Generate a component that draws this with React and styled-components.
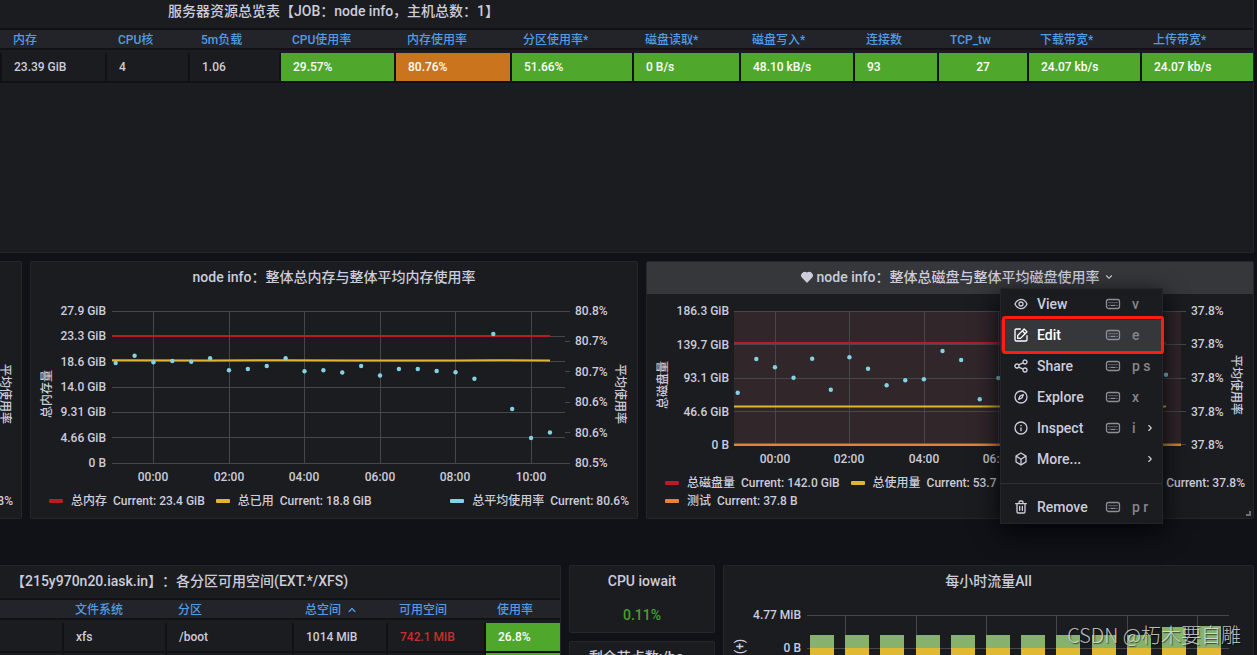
import React, { useState } from 'react';
import styled, { createGlobalStyle } from 'styled-components';

//-----------------------------------------------{data}------------------------------------------------------//

const serverColumns = [
    { label: '内存', width: 105, value: '23.39 GiB' },
    { label: 'CPU核', width: 83, value: '4' },
    { label: '5m负载', width: 91, value: '1.06' },
    { label: 'CPU使用率', width: 115, value: '29.57%', fill: '#4fa82c' },
    { label: '内存使用率', width: 116, value: '80.76%', fill: '#ca751e' },
    { label: '分区使用率*', width: 122, value: '51.66%', fill: '#4fa82c' },
    { label: '磁盘读取*', width: 107, value: '0 B/s', fill: '#4fa82c' },
    { label: '磁盘写入*', width: 114, value: '48.10 kB/s', fill: '#4fa82c' },
    { label: '连接数', width: 84, value: '93', fill: '#4fa82c' },
    { label: 'TCP_tw', width: 90, value: '27', fill: '#4fa82c', center: true },
    { label: '下载带宽*', width: 113, value: '24.07 kb/s', fill: '#4fa82c' },
    { label: '上传带宽*', value: '24.07 kb/s', fill: '#4fa82c' },
];

const diskColumns = [
    { label: '', width: 64 },
    { label: '文件系统', width: 103 },
    { label: '分区', width: 127 },
    { label: '总空间', width: 94, sorted: true },
    { label: '可用空间', width: 98 },
    { label: '使用率' },
];

const memoryPoints = [
    363, 355.7, 362.3, 361, 361.7, 358.3, 370.3, 369, 366, 358.3, 371.3, 370.3, 372.5,
    366, 375.5, 369, 369, 371, 372.3, 378.7, 334, 409, 438, 432.5,
];

const diskPoints = [
    392.7, 359, 367.3, 377.7, 358.7, 389.7, 357.3, 368.7, 385.3, 380.3, 379.3, 351, 360,
    399.3, 378, 371, 383, 366, 374, 388, 362, 379, 370, 374.7,
];

const trafficBars = [635, 635, 635, 635, 635, 635, 635, 635, 635, 635, 627, 626];

const menuItems = [
    { label: 'View', icon: 'eye', keys: 'v' },
    { label: 'Edit', icon: 'edit', keys: 'e', active: true },
    { label: 'Share', icon: 'share', keys: 'p s' },
    { label: 'Explore', icon: 'compass', keys: 'x' },
    { label: 'Inspect', icon: 'info', keys: 'i', sub: true },
    { label: 'More...', icon: 'cube', sub: true },
];

const iconPaths = {
    eye: 'M21.92,11.6C19.9,6.91,16.1,4,12,4S4.1,6.91,2.08,11.6a1,1,0,0,0,0,.8C4.1,17.09,7.9,20,12,20s7.9-2.91,9.92-7.6A1,1,0,0,0,21.92,11.6ZM12,18c-3.17,0-6.17-2.29-7.9-6C5.83,8.29,8.83,6,12,6s6.17,2.29,7.9,6C18.17,15.71,15.17,18,12,18ZM12,8a4,4,0,1,0,4,4A4,4,0,0,0,12,8Zm0,6a2,2,0,1,1,2-2A2,2,0,0,1,12,14Z',
    edit: 'M21,12a1,1,0,0,0-1,1v6a1,1,0,0,1-1,1H5a1,1,0,0,1-1-1V5A1,1,0,0,1,5,4h6a1,1,0,0,0,0-2H5A3,3,0,0,0,2,5V19a3,3,0,0,0,3,3H19a3,3,0,0,0,3-3V13A1,1,0,0,0,21,12ZM6,12.76V17a1,1,0,0,0,1,1h4.24a1,1,0,0,0,.71-.29l6.92-6.93h0L21.71,8a1,1,0,0,0,0-1.42L17.47,2.29a1,1,0,0,0-1.42,0L13.23,5.12h0L6.29,12.05A1,1,0,0,0,6,12.76ZM16.76,4.41l2.83,2.83L18.17,8.66,15.34,5.83ZM8,13.17l5.93-5.93,2.83,2.83L10.83,16H8Z',
    share: 'M18,14a4,4,0,0,0-3.08,1.48l-5.1-2.35a3.64,3.64,0,0,0,0-2.26l5.1-2.35A4,4,0,1,0,14,6a4.17,4.17,0,0,0,.07.71L8.79,9.14a4,4,0,1,0,0,5.72l5.28,2.43A4.17,4.17,0,0,0,14,18a4,4,0,1,0,4-4ZM18,4a2,2,0,1,1-2,2A2,2,0,0,1,18,4ZM6,14a2,2,0,1,1,2-2A2,2,0,0,1,6,14Zm12,6a2,2,0,1,1,2-2A2,2,0,0,1,18,20Z',
    compass: 'M12,2A10,10,0,1,0,22,12,10,10,0,0,0,12,2Zm0,18a8,8,0,1,1,8-8A8,8,0,0,1,12,20ZM15.14,7.55l-5,2.12a1,1,0,0,0-.52.52l-2.12,5a1,1,0,0,0,.21,1.1,1,1,0,0,0,.7.29.93.93,0,0,0,.4-.08l5-2.12a1,1,0,0,0,.52-.52l2.12-5a1,1,0,0,0-1.31-1.31Zm-2.49,5.1-2.28,1,1-2.28,2.28-1Z',
    info: 'M12,2A10,10,0,1,0,22,12,10,10,0,0,0,12,2Zm0,18a8,8,0,1,1,8-8A8,8,0,0,1,12,20Zm0-9a1,1,0,0,0-1,1v4a1,1,0,0,0,2,0V12A1,1,0,0,0,12,11Zm0-4a1.25,1.25,0,1,0,1.25,1.25A1.25,1.25,0,0,0,12,7Z',
    cube: 'M20.47,7.37s0,0,0-.08l-.06-.15a.71.71,0,0,0-.07-.09.94.94,0,0,0-.09-.12l-.09-.07L20,6.78l-7.5-4.63a1,1,0,0,0-1.06,0L4,6.78l-.09.08-.09.07a.94.94,0,0,0-.09.12.71.71,0,0,0-.07.09l-.06.15s0,0,0,.08a1.15,1.15,0,0,0,0,.26v8.74a1,1,0,0,0,.47.85l7.5,4.63h0a.47.47,0,0,0,.15.06s.05,0,.08,0a.86.86,0,0,0,.52,0s.05,0,.08,0a.47.47,0,0,0,.15-.06h0L20,17.22a1,1,0,0,0,.47-.85V7.63A1.15,1.15,0,0,0,20.47,7.37ZM11,19.21l-5.5-3.4V9.43l5.5,3.39Zm1-8.12L6.4,7.63,12,4.18l5.6,3.45Zm6.5,4.72L13,19.21V12.82l5.5-3.39Z',
    trash: 'M10,18a1,1,0,0,0,1-1V11a1,1,0,0,0-2,0v6A1,1,0,0,0,10,18ZM20,6H16V5a3,3,0,0,0-3-3H11A3,3,0,0,0,8,5V6H4A1,1,0,0,0,4,8H5V19a3,3,0,0,0,3,3h8a3,3,0,0,0,3-3V8h1a1,1,0,0,0,0-2ZM10,5a1,1,0,0,1,1-1h2a1,1,0,0,1,1,1V6H10Zm7,14a1,1,0,0,1-1,1H8a1,1,0,0,1-1-1V8H17Zm-3-1a1,1,0,0,0,1-1V11a1,1,0,0,0-2,0v6A1,1,0,0,0,14,18Z',
    down: 'M17,9.17a1,1,0,0,0-1.41,0L12,12.71,8.46,9.17a1,1,0,0,0-1.41,0,1,1,0,0,0,0,1.42l4.24,4.24a1,1,0,0,0,1.42,0L17,10.59A1,1,0,0,0,17,9.17Z',
    right: 'M14.83,11.29,10.59,7.05a1,1,0,0,0-1.42,0,1,1,0,0,0,0,1.41L12.71,12,9.17,15.54a1,1,0,0,0,0,1.41,1,1,0,0,0,.71.29,1,1,0,0,0,.71-.29l4.24-4.24A1,1,0,0,0,14.83,11.29Z',
    up: 'M17,13.41,12.71,9.17a1,1,0,0,0-1.42,0L7.05,13.41a1,1,0,0,0,0,1.42,1,1,0,0,0,1.41,0L12,11.29l3.54,3.54a1,1,0,0,0,.7.29,1,1,0,0,0,.71-.29A1,1,0,0,0,17,13.41Z',
    heart: 'M20.16,5A6.29,6.29,0,0,0,12,4.36,6.27,6.27,0,0,0,3.84,5a6.27,6.27,0,0,0,0,8.89l7.45,7.46a1,1,0,0,0,1.42,0l7.45-7.46A6.27,6.27,0,0,0,20.16,5Z',
};

//-----------------------------------------------{styled components}------------------------------------------------------//

const GlobalStyle = createGlobalStyle`
    * {
        box-sizing: border-box;
    }

    body {
        margin: 0;
        background: #111217;
        color: #ccccdc;
        font-family: Roboto, 'Noto Sans CJK SC', sans-serif;
        font-size: 12px;
        font-weight: 500;
        line-height: 18px;
        text-spacing-trim: space-all;
    }
`;

const Page = styled.main`
    position: relative;
    height: 100vh;
    padding-right: 3px;
    overflow: hidden;
`;

const Row = styled.div`
    display: grid;
    grid-template-columns: ${(props) => props.$columns};
    gap: 8px;
    margin-top: ${(props) => props.$gap}px;
`;

const Stack = styled.div`
    display: flex;
    flex-direction: column;
    gap: 8px;
`;

const Panel = styled.section`
    position: relative;
    display: flex;
    flex-direction: column;
    min-width: 0;
    min-height: ${(props) => props.$minHeight || 0}px;
    background: #1b1c1f;
    border: 1px solid #25262b;
    border-left-width: ${(props) => (props.$cut ? 0 : 1)}px;
    border-radius: ${(props) => (props.$cut ? '0 2px 2px 0' : '2px')};
`;

// the overview is scrolled a few pixels past the top edge
const OverviewPanel = styled(Panel)`
    margin-top: -5px;
`;

const PanelTitle = styled.h2`
    display: flex;
    align-items: center;
    justify-content: ${(props) => (props.$indent ? 'flex-start' : 'center')};
    flex: none;
    height: 32px;
    margin: 0;
    padding: 0 0 2px ${(props) => props.$indent || 0}px;
    font-size: 14px;
    font-weight: 500;
    white-space: nowrap;
`;

const HoveredTitle = styled(PanelTitle)`
    gap: 3px;
    padding-left: 16px;
    background: #36373b;
    cursor: pointer;
`;

const Table = styled.table`
    width: 100%;
    table-layout: fixed;
    border-collapse: separate;
    border-spacing: 0;

    tbody::before {
        content: '';
        display: block;
        height: 3px;
    }
`;

const HeadCell = styled.th`
    height: 22px;
    padding: 2px 0 0 11px;
    background: #22242a;
    border-top: 2px solid #111217;
    border-bottom: 2px solid #111217;
    color: #4f9de6;
    font-weight: 500;
    line-height: 16px;
    text-align: left;
    white-space: nowrap;

    svg {
        vertical-align: top;
    }
`;

const Cell = styled.td`
    height: 30px;
    padding: 0 0 0 ${(props) => (props.$center ? 0 : 12)}px;
    background: ${(props) => props.$fill || 'transparent'};
    border-right: 2px solid #111217;
    border-bottom: 2px solid #111217;
    color: ${(props) => props.$color || (props.$fill ? '#fff' : '#ccccdc')};
    line-height: 18px;
    text-align: ${(props) => (props.$center ? 'center' : 'left')};
    white-space: nowrap;

    &:last-child {
        border-right: none;
    }
`;

const Plot = styled.svg`
    display: block;
    width: 100%;
    height: auto;
    fill: #ccccdc;
    font-size: 12px;
`;

const Legend = styled.div`
    display: flex;
    align-items: flex-start;
    justify-content: space-between;
    gap: 10px;
    padding: 0 8px 8px 18px;
`;

const LegendGroup = styled.div`
    display: flex;
    flex-wrap: wrap;
    column-gap: 11px;
`;

const LegendItem = styled.div`
    display: flex;
    align-items: center;
    white-space: nowrap;

    &::before {
        content: '';
        width: 14px;
        height: 4px;
        margin-right: 8px;
        border-radius: 1px;
        background: ${(props) => props.$color};
    }

    span {
        margin-left: 6px;
    }
`;

const CutLegend = styled.div`
    display: flex;
    justify-content: flex-end;
    margin: 0 8px 8px 0;
    overflow: hidden;
`;

const Menu = styled.div`
    position: absolute;
    top: 26px;
    right: 90px;
    z-index: 2;
    width: 163px;
    background: #1b1c1f;
    border: 1px solid #25262b;
    box-shadow: 0 8px 24px rgb(1, 4, 9);
`;

const MenuButton = styled.button`
    display: grid;
    grid-template-columns: 16px 60px 16px 6px 14px;
    column-gap: 8px;
    align-items: center;
    width: 100%;
    height: 31px;
    padding: 0 0 2px 12px;
    background: ${(props) => (props.$active ? '#36373b' : 'transparent')};
    border: none;
    color: ${(props) => (props.$active ? '#fff' : '#ccccdc')};
    font: inherit;
    font-size: 14px;
    text-align: left;
    white-space: nowrap;
    cursor: pointer;
`;

const Shortcut = styled.kbd`
    padding-left: 3px;
    color: #85858f;
    font-family: inherit;
    font-size: 14px;
    font-weight: 500;
`;

const Divider = styled.hr`
    height: 1px;
    margin: 8px 0;
    background: #2f3036;
    border: none;
`;

const Highlight = styled.div`
    position: absolute;
    top: 27px;
    left: 1px;
    right: -2px;
    height: 38px;
    border: 3px solid #ff1d0f;
    border-radius: 3px;
    pointer-events: none;
`;

const ResizeHandle = styled.span`
    position: absolute;
    right: 2px;
    bottom: 2px;
    width: 5px;
    height: 5px;
    border-right: 2px solid #6e6f76;
    border-bottom: 2px solid #6e6f76;
`;

const StatValue = styled.div`
    padding: 8px 0;
    color: #44a02c;
    font-size: 14px;
    text-align: center;
`;

const Watermark = styled.div`
    position: absolute;
    right: 16px;
    bottom: 6px;
    color: rgba(230, 230, 230, 0.8);
    font-family: 'Noto Sans CJK SC', sans-serif;
    font-size: 20px;
    font-weight: 300;
    line-height: 28px;
    text-shadow: 1px 1px 1px rgba(0, 0, 0, 0.6);
`;

//-----------------------------------------------{small parts}------------------------------------------------------//

const Icon = ({ name, size = 16 }) => (
    <svg width={size} height={size} viewBox="0 0 24 24" fill="currentColor" aria-hidden="true">
        <path d={iconPaths[name]} />
    </svg>
);

const Keyboard = () => (
    <svg width="16" height="16" viewBox="0 0 16 16" fill="none" stroke="#8e8e99" aria-hidden="true">
        <rect x="1.5" y="3.5" width="13" height="9" rx="2" strokeWidth="1.3" />
        <path d="M3.5 6.5h9" strokeDasharray="1 1" />
        <path d="M3.5 8h9" strokeDasharray="1 1" strokeDashoffset="1" strokeOpacity="0.5" />
        <path d="M3.5 9.5h1M5.5 9.5h5M11.5 9.5h1" />
    </svg>
);

const HLines = ({ ys, x1, x2 }) =>
    ys.map((y) => <path key={y} d={`M${x1} ${y}.5H${x2}`} stroke="#46474b" />);

const VLines = ({ xs, y1, y2 }) =>
    xs.map((x) => <path key={x} d={`M${x}.5 ${y1}V${y2}`} stroke="#46474b" />);

const Labels = ({ items, x, anchor }) =>
    items.map(([y, label]) => (
        <text key={y} x={x} y={y + 4} textAnchor={anchor}>{label}</text>
    ));

const Times = ({ xs, labels, y }) =>
    labels.map((label, i) => (
        <text key={label} x={xs[i]} y={y} textAnchor="middle">{label}</text>
    ));

const Dots = ({ points, start, step }) =>
    points.map((y, i) => <circle key={i} cx={start + i * step} cy={y} r="2.2" fill="#82d3e6" />);

const AxisTitle = ({ x, y, turn, children }) => (
    <text transform={`translate(${x} ${y}) rotate(${turn})`} textAnchor="middle">{children}</text>
);

//-----------------------------------------------{charts}------------------------------------------------------//

const MemoryChart = () => {
    const xs = [153, 229, 304, 380, 455, 531];
    return (
        <Plot viewBox="31 294 606 198" role="img" aria-label="整体总内存与整体平均内存使用率">
            <HLines ys={[311, 336, 361, 387, 412, 437, 463]} x1={112} x2={565} />
            <VLines xs={xs} y1={311} y2={463} />
            <HLines ys={[311, 341, 371, 402, 432, 463]} x1={565} x2={570} />
            <path d="M112 336H550" stroke="#b91c25" strokeWidth="2" />
            <path d="M112 360.3L210 360.6L285 360.2L361 360.6L455 360.6L493 360.2L550 360.6" fill="none" stroke="#e0b52f" strokeWidth="2" />
            <Dots points={memoryPoints} start={115.7} step={18.88} />
            <Labels
                x={106}
                anchor="end"
                items={[[311, '27.9 GiB'], [336, '23.3 GiB'], [362, '18.6 GiB'], [387, '14.0 GiB'], [412, '9.31 GiB'], [438, '4.66 GiB'], [463, '0 B']]}
            />
            <Labels
                x={575}
                anchor="start"
                items={[[311, '80.8%'], [341, '80.7%'], [372, '80.7%'], [402, '80.6%'], [433, '80.6%'], [463, '80.5%']]}
            />
            <Times xs={xs} y={481} labels={['00:00', '02:00', '04:00', '06:00', '08:00', '10:00']} />
            <AxisTitle x={51} y={394} turn={-90}>总内存量</AxisTitle>
            <AxisTitle x={616} y={394} turn={90}>平均使用率</AxisTitle>
        </Plot>
    );
};

const DiskChart = () => {
    const xs = [775, 849, 924, 998, 1073, 1147];
    return (
        <Plot viewBox="647 294 606 180" role="img" aria-label="整体总磁盘与整体平均磁盘使用率">
            <rect x="734" y="311" width="447" height="134" fill="#31262a" />
            <HLines ys={[311, 344, 378, 411, 444]} x1={734} x2={1186} />
            <VLines xs={xs} y1={311} y2={444} />
            <path d="M734 343H1166" stroke="#b91c25" strokeWidth="2" />
            <path d="M734 406.5H1166" stroke="#e0b52f" strokeWidth="2" />
            <path d="M734 443.5H1181" stroke="#b93a25" />
            <path d="M734 445H1181" stroke="#e5852f" strokeWidth="2" />
            <Dots points={diskPoints} start={737.7} step={18.62} />
            <Labels
                x={729}
                anchor="end"
                items={[[311, '186.3 GiB'], [345, '139.7 GiB'], [378, '93.1 GiB'], [412, '46.6 GiB'], [445, '0 B']]}
            />
            <Labels
                x={1191}
                anchor="start"
                items={[[311, '37.8%'], [344, '37.8%'], [378, '37.8%'], [412, '37.8%'], [445, '37.8%']]}
            />
            <Times xs={xs} y={463} labels={['00:00', '02:00', '04:00', '06:00', '08:00', '10:00']} />
            <AxisTitle x={667} y={385} turn={-90}>总磁盘量</AxisTitle>
            <AxisTitle x={1232} y={385} turn={90}>平均使用率</AxisTitle>
        </Plot>
    );
};

const TrafficChart = () => (
    <Plot viewBox="724 598 529 90" role="img" aria-label="每小时流量All">
        <HLines ys={[615, 648]} x1={807} x2={1229} />
        <VLines xs={[845, 916, 986, 1056, 1127, 1197]} y1={615} y2={688} />
        {trafficBars.map((top, i) => {
            const x = Math.round(810 + i * 35.2);
            return (
                <g key={i}>
                    <rect x={x} y={top} width="24" height={648 - top} fill="#86b26c" />
                    <rect x={x} y="648" width="24" height="40" fill="#e0b832" />
                </g>
            );
        })}
        <Labels x={801} anchor="end" items={[[615, '4.77 MiB'], [648, '0 B']]} />
        <text transform="translate(744 639) rotate(-90)" textAnchor="end">(+)</text>
    </Plot>
);

const PanelMenu = () => (
    <Menu role="menu">
        {menuItems.map((item) => (
            <MenuButton key={item.label} role="menuitem" $active={item.active}>
                <Icon name={item.icon} />
                <span>{item.label}</span>
                {item.keys ? <Keyboard /> : <span />}
                <Shortcut>{item.keys}</Shortcut>
                {item.sub ? <Icon name="right" size={14} /> : null}
            </MenuButton>
        ))}
        <Divider />
        <MenuButton role="menuitem">
            <Icon name="trash" />
            <span>Remove</span>
            <Keyboard />
            <Shortcut>p r</Shortcut>
        </MenuButton>
        <Highlight />
    </Menu>
);

//-----------------------------------------------{App}------------------------------------------------------//

const App = () => {
    const [menuOpen, setMenuOpen] = useState(true);

    return (
        <Page>
            <GlobalStyle />
            <OverviewPanel $cut $minHeight={258}>
                <PanelTitle $indent={168}>服务器资源总览表【JOB：node info，主机总数：1】</PanelTitle>
                <Table>
                    <colgroup>
                        <col width="2" />
                        {serverColumns.map((col) => <col key={col.label} width={col.width} />)}
                    </colgroup>
                    <thead>
                        <tr>
                            <HeadCell as="td" />
                            {serverColumns.map((col) => <HeadCell key={col.label}>{col.label}</HeadCell>)}
                        </tr>
                    </thead>
                    <tbody>
                        <tr>
                            <Cell $center />
                            {serverColumns.map((col) => (
                                <Cell key={col.label} $fill={col.fill} $center={col.center}>{col.value}</Cell>
                            ))}
                        </tr>
                    </tbody>
                </Table>
            </OverviewPanel>

            <Row $gap={8} $columns="22px minmax(0, 1fr) minmax(0, 1fr)">
                <Panel $cut>
                    <PanelTitle />
                    <Plot viewBox="0 294 21 198" role="img" aria-label="平均使用率">
                        <AxisTitle x={1} y={394} turn={90}>平均使用率</AxisTitle>
                    </Plot>
                    <CutLegend>8%</CutLegend>
                </Panel>

                <Panel>
                    <PanelTitle>node info：整体总内存与整体平均内存使用率</PanelTitle>
                    <MemoryChart />
                    <Legend>
                        <LegendGroup>
                            <LegendItem $color="#b91c25">总内存<span>Current: 23.4 GiB</span></LegendItem>
                            <LegendItem $color="#e0b52f">总已用<span>Current: 18.8 GiB</span></LegendItem>
                        </LegendGroup>
                        <LegendItem $color="#82d3e6">总平均使用率<span>Current: 80.6%</span></LegendItem>
                    </Legend>
                </Panel>

                <Panel>
                    <HoveredTitle onClick={() => setMenuOpen(!menuOpen)}>
                        <Icon name="heart" size={14} />
                        node info：整体总磁盘与整体平均磁盘使用率
                        <Icon name="down" size={14} />
                    </HoveredTitle>
                    <DiskChart />
                    <Legend>
                        <LegendGroup>
                            <LegendItem $color="#b91c25">总磁盘量<span>Current: 142.0 GiB</span></LegendItem>
                            <LegendItem $color="#e0b52f">总使用量<span>Current: 53.7 GiB</span></LegendItem>
                            <LegendItem $color="#e5852f">测试<span>Current: 37.8 B</span></LegendItem>
                        </LegendGroup>
                        <LegendItem $color="#82d3e6">总平均使用率<span>Current: 37.8%</span></LegendItem>
                    </Legend>
                    <ResizeHandle />
                    {menuOpen ? <PanelMenu /> : null}
                </Panel>
            </Row>

            <Row $gap={46} $columns="minmax(0, 561fr) minmax(0, 146fr) minmax(0, 531fr)">
                <Panel $cut>
                    <PanelTitle $indent={11}>【215y970n20.iask.in】：各分区可用空间(EXT.*/XFS)</PanelTitle>
                    <Table>
                        <colgroup>
                            {diskColumns.map((col) => <col key={col.label} width={col.width} />)}
                        </colgroup>
                        <thead>
                            <tr>
                                {diskColumns.map((col) => (
                                    <HeadCell key={col.label}>
                                        {col.label}
                                        {col.sorted ? <> <Icon name="up" /></> : null}
                                    </HeadCell>
                                ))}
                            </tr>
                        </thead>
                        <tbody>
                            <tr>
                                <Cell />
                                <Cell>xfs</Cell>
                                <Cell>/boot</Cell>
                                <Cell>1014 MiB</Cell>
                                <Cell $color="#c4302b">742.1 MiB</Cell>
                                <Cell $fill="#4fa82c">26.8%</Cell>
                            </tr>
                            <tr>
                                <Cell />
                                <Cell />
                                <Cell />
                                <Cell />
                                <Cell />
                                <Cell $fill="#4fa82c" />
                            </tr>
                        </tbody>
                    </Table>
                </Panel>

                <Stack>
                    <Panel>
                        <PanelTitle>CPU iowait</PanelTitle>
                        <StatValue>0.11%</StatValue>
                    </Panel>
                    <Panel>
                        <PanelTitle>剩余节点数:/bo...</PanelTitle>
                    </Panel>
                </Stack>

                <Panel>
                    <PanelTitle>每小时流量All</PanelTitle>
                    <TrafficChart />
                </Panel>
            </Row>

            <Watermark>CSDN @朽木要自雕</Watermark>
        </Page>
    );
};

export default App;
